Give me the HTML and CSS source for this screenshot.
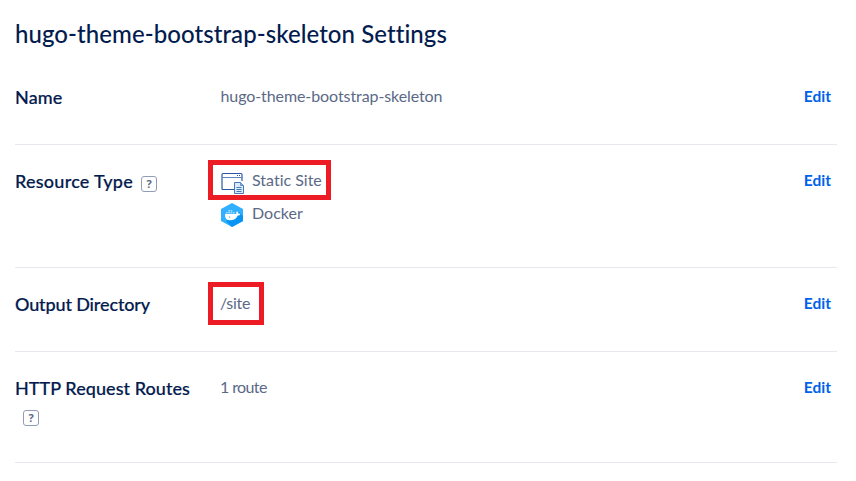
FILE: index.html
```
<!DOCTYPE html>
<html lang="en">
<head>
<meta charset="utf-8">
<title>hugo-theme-bootstrap-skeleton Settings</title>
<link rel="stylesheet" href="styles.css">
</head>
<body>
<main class="settings">
  <h1 class="title">hugo-theme-bootstrap-skeleton Settings</h1>
  <section class="row">
    <h2 class="label"><span class="label-name">Name</span></h2>
    <div class="value"><span class="value-name">hugo-theme-bootstrap-skeleton</span></div>
    <a class="edit">Edit</a>
  </section>
  <section class="row row-type">
    <h2 class="label"><span class="label-type">Resource Type</span><span class="help">?</span></h2>
    <div class="value">
      <div class="item marked marked-type">
        <svg class="icon" viewBox="0 0 24 24" fill="none">
          <path d="M14 19.500H3Q2 19.500 2 18.500V4.500Q2 3.500 3 3.500H21Q22 3.500 22 4.500V11" stroke="#2858a5" stroke-width="1.2"/>
          <path d="M2 7.500H22" stroke="#5c86c4"/>
          <path d="M17 5.500H18M19 5.500H20" stroke="#2858a5"/>
          <path d="M14.500 12.500H20.500L23.500 15.500V23.500H14.500Z" fill="#dbe9f8" stroke="#4779b9"/>
          <path d="M20.500 12.500V15.500H23.500" fill="#8aafdc" stroke="#4779b9" stroke-width=".7"/>
          <path d="M16.500 17.500H21.500M16.500 19.500H21.500M16.500 21.500H21.500" stroke="#4779b9"/>
        </svg>
        <span class="item-static">Static Site</span>
      </div>
      <div class="item">
        <svg class="icon" viewBox="0 0 24 24">
          <path d="M12 0 23 6V18L12 24 1 18V6Z" fill="#31b0ff"/>
          <path d="M19 9 23 13V18L12 24 6 18 17 12Z" fill="#0794f5"/>
          <path d="M5 11H16.300Q15.900 9.500 17 8.300 18.300 9.200 18.200 10.500 19.500 10.200 20.500 10.900 19.700 12.500 17.800 12.400 15.500 17.300 10 17.300 4.700 17.300 5 11Z" fill="#fff"/>
          <path d="M6 9H7.700V10.500H6ZM8.300 9H10V10.500H8.300ZM10.600 9H12.300V10.500H10.600ZM12.900 9H14.600V10.500H12.900ZM8.300 7H10V8.500H8.300ZM10.600 7H12.300V8.500H10.600Z" fill="#a5dbff"/>
          <circle cx="9.500" cy="14" r=".6" fill="#1687d8"/>
        </svg>
        <span class="item-docker">Docker</span>
      </div>
    </div>
    <a class="edit">Edit</a>
  </section>
  <section class="row">
    <h2 class="label"><span class="label-output">Output Directory</span></h2>
    <div class="value"><div class="marked marked-site"><span class="value-site">/site</span></div></div>
    <a class="edit">Edit</a>
  </section>
  <section class="row row-routes">
    <h2 class="label"><span class="label-routes">HTTP Request Routes</span> <span class="help">?</span></h2>
    <div class="value"><span class="value-routes">1 route</span></div>
    <a class="edit">Edit</a>
  </section>
</main>
</body>
</html>
```
FILE: styles.css
```
*, *::before, *::after { box-sizing: border-box; }
body {
  margin: 0;
  background: #fff;
  color: #5b6987;
  font: 16px/24px Lato, "Open Sans", sans-serif;
  font-variant-ligatures: none;
}
.settings { width: 822px; margin-left: 15px; padding-top: 19px; }
.title {
  margin: 0 0 12px;
  height: 30px;
  font-size: 24px;
  line-height: 30px;
  font-weight: 500;
  letter-spacing: .06px;
  color: #031b4e;
}
.row {
  display: grid;
  grid-template-columns: 205.5px 1fr auto;
  align-items: start;
  height: 84px;
  padding: 23px 6px 0 0;
  border-bottom: 1px solid #e5e8ed;
}
.row-type { height: 123px; }
.row-routes { height: 111px; }
.label {
  margin: 0;
  padding-top: 1px;
  width: 190px;
  font-size: 18px;
  line-height: 24px;
  font-weight: 500;
  -webkit-text-stroke: .2px;
  color: #031b4e;
}
.label-name { letter-spacing: .15px; }
.label-type { letter-spacing: .25px; }
.label-output { letter-spacing: -.13px; }
.label-routes { letter-spacing: .06px; }
.row-routes .label { line-height: 28px; padding-top: 0; margin-top: -1px; }
.help {
  display: inline-block;
  width: 16px;
  height: 16px;
  margin-left: 8px;
  border: 1.500px solid #929cb6;
  border-radius: 3px;
  font: 700 11px/14px "Open Sans", sans-serif;
  -webkit-text-stroke: 0;
  text-align: center;
  position: relative;
  top: -3px;
  vertical-align: -3px;
  color: #5b6987;
}
.row-routes .help { top: -4px; }
.value { height: 24px; }
.value-name { letter-spacing: -.09px; }
.value-site { letter-spacing: -.3px; margin-left: -.5px; }
.value-routes { letter-spacing: -.6px; margin-left: -.5px; }
.item { display: flex; align-items: center; height: 24px; margin-bottom: 9px; }
.icon { width: 24px; height: 24px; flex: none; margin: 3px 8px 0 -.5px; }
.marked { position: relative; }
.marked::after { content: ""; position: absolute; border: 5px solid #ed1c24; }
.marked-type::after { left: -12.500px; top: -8px; width: 123px; height: 40px; }
.marked-site::after { left: -12.500px; top: -9px; width: 56px; height: 43px; }
.edit { color: #0061eb; font-weight: 700; font-size: 15.500px; }
```
